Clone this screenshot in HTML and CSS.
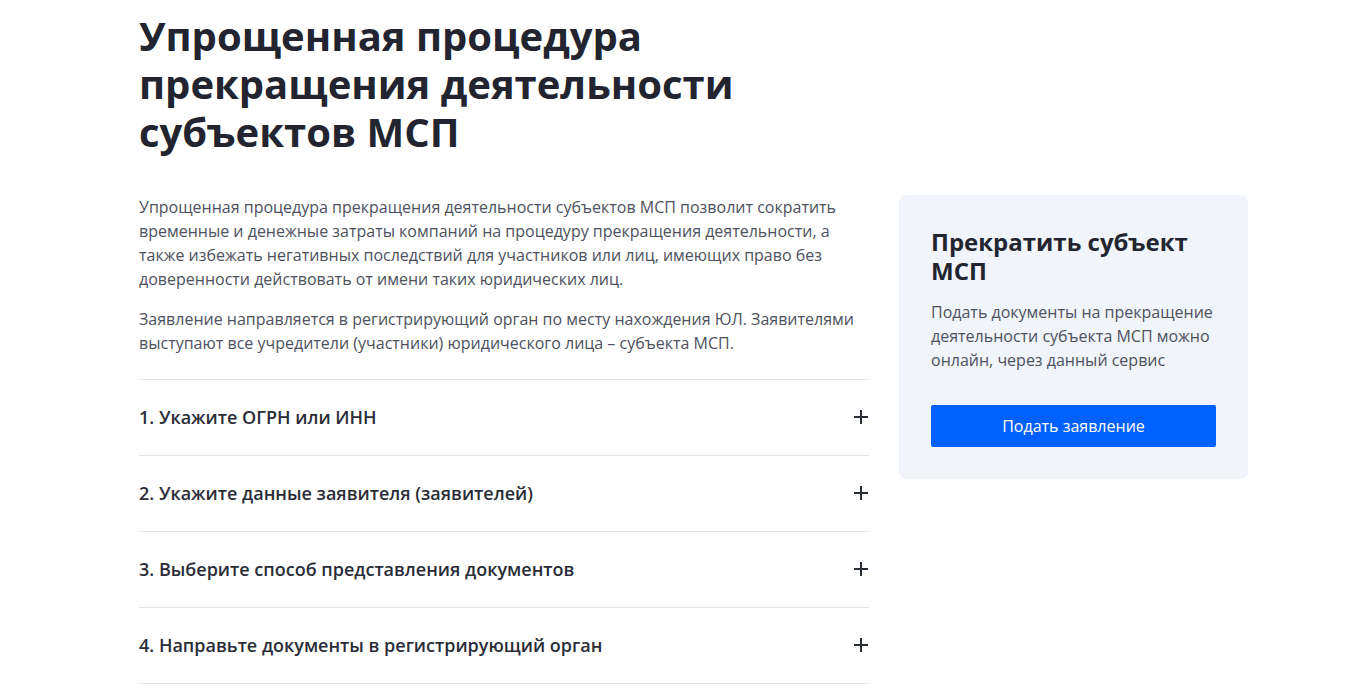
FILE: index.html
```html
<!DOCTYPE html>
<html>

<head>
    <meta charset="UTF-8">
    <title>Упрощенная процедура прекращения деятельности субъектов МСП</title>

    <link rel="stylesheet" href="styles.css">
</head>

<body>
<div class="page">
    <h1 class="page-title">Упрощенная процедура<br>прекращения деятельности<br>субъектов МСП</h1>

    <div class="layout">
        <div class="main">
            <p>Упрощенная процедура прекращения деятельности субъектов МСП позволит сократить временные и денежные затраты компаний на процедуру прекращения деятельности, а также избежать негативных последствий для участников или лиц, имеющих право без доверенности действовать от имени таких юридических лиц.</p>
            <p>Заявление направляется в регистрирующий орган по месту нахождения ЮЛ. Заявителями выступают все учредители (участники) юридического лица – субъекта МСП.</p>

            <div class="steps">
                <div class="step">
                    <span>1. Укажите ОГРН или ИНН</span>
                    <span class="step-plus"></span>
                </div>
                <div class="step">
                    <span>2. Укажите данные заявителя (заявителей)</span>
                    <span class="step-plus"></span>
                </div>
                <div class="step">
                    <span>3. Выберите способ представления документов</span>
                    <span class="step-plus"></span>
                </div>
                <div class="step">
                    <span>4. Направьте документы в регистрирующий орган</span>
                    <span class="step-plus"></span>
                </div>
            </div>
        </div>

        <div class="side">
            <div class="card">
                <h3>Прекратить субъект МСП</h3>
                <p>Подать документы на прекращение деятельности субъекта МСП можно онлайн, через данный сервис</p>
                <button class="card-button">Подать заявление</button>
            </div>
        </div>
    </div>
</div>
</body>

</html>
```

FILE: styles.css
```css
body {
    margin: 0;
    font-family: "Open Sans", "Noto Sans", sans-serif;
    color: #4d5160;
    background: #fff;
}

.page {
    padding: 12px 0 0 139px;
}

.page-title {
    margin: 0 0 39px;
    font-size: 40px;
    line-height: 48px;
    font-weight: 700;
    color: #222530;
}

.layout {
    display: grid;
    grid-template-columns: 730px 349px;
    gap: 30px;
}

.main p {
    margin: 0 0 16px;
    font-size: 16px;
    line-height: 24px;
}

.steps {
    margin-top: 24px;
    border-bottom: 1px solid #e3e5ea;
}

.step {
    display: flex;
    align-items: center;
    justify-content: space-between;
    height: 76px;
    padding-bottom: 2px;
    border-top: 1px solid #e3e5ea;
    font-size: 18px;
    font-weight: 600;
    color: #2a2d38;
    box-sizing: border-box;
}

/* plus sign drawn with two bars */
.step-plus {
    position: relative;
    width: 14px;
    height: 14px;
    margin-right: 1px;
}

.step-plus::before,
.step-plus::after {
    content: "";
    position: absolute;
    background: #2a2d38;
}

.step-plus::before {
    left: 0;
    top: 6px;
    width: 14px;
    height: 2px;
}

.step-plus::after {
    left: 6px;
    top: 0;
    width: 2px;
    height: 14px;
}

.card {
    background: #f1f4fa;
    border-radius: 8px;
    padding: 32px;
}

.card h3 {
    margin: 0 0 15px;
    font-size: 24px;
    line-height: 29px;
    font-weight: 700;
    color: #222530;
}

.card p {
    margin: 0 0 33px;
    font-size: 16px;
    line-height: 24px;
}

.card-button {
    display: block;
    width: 100%;
    height: 42px;
    border: 0;
    border-radius: 2px;
    background: #0061ff;
    color: #fff;
    font-family: inherit;
    font-size: 16px;
}
```
